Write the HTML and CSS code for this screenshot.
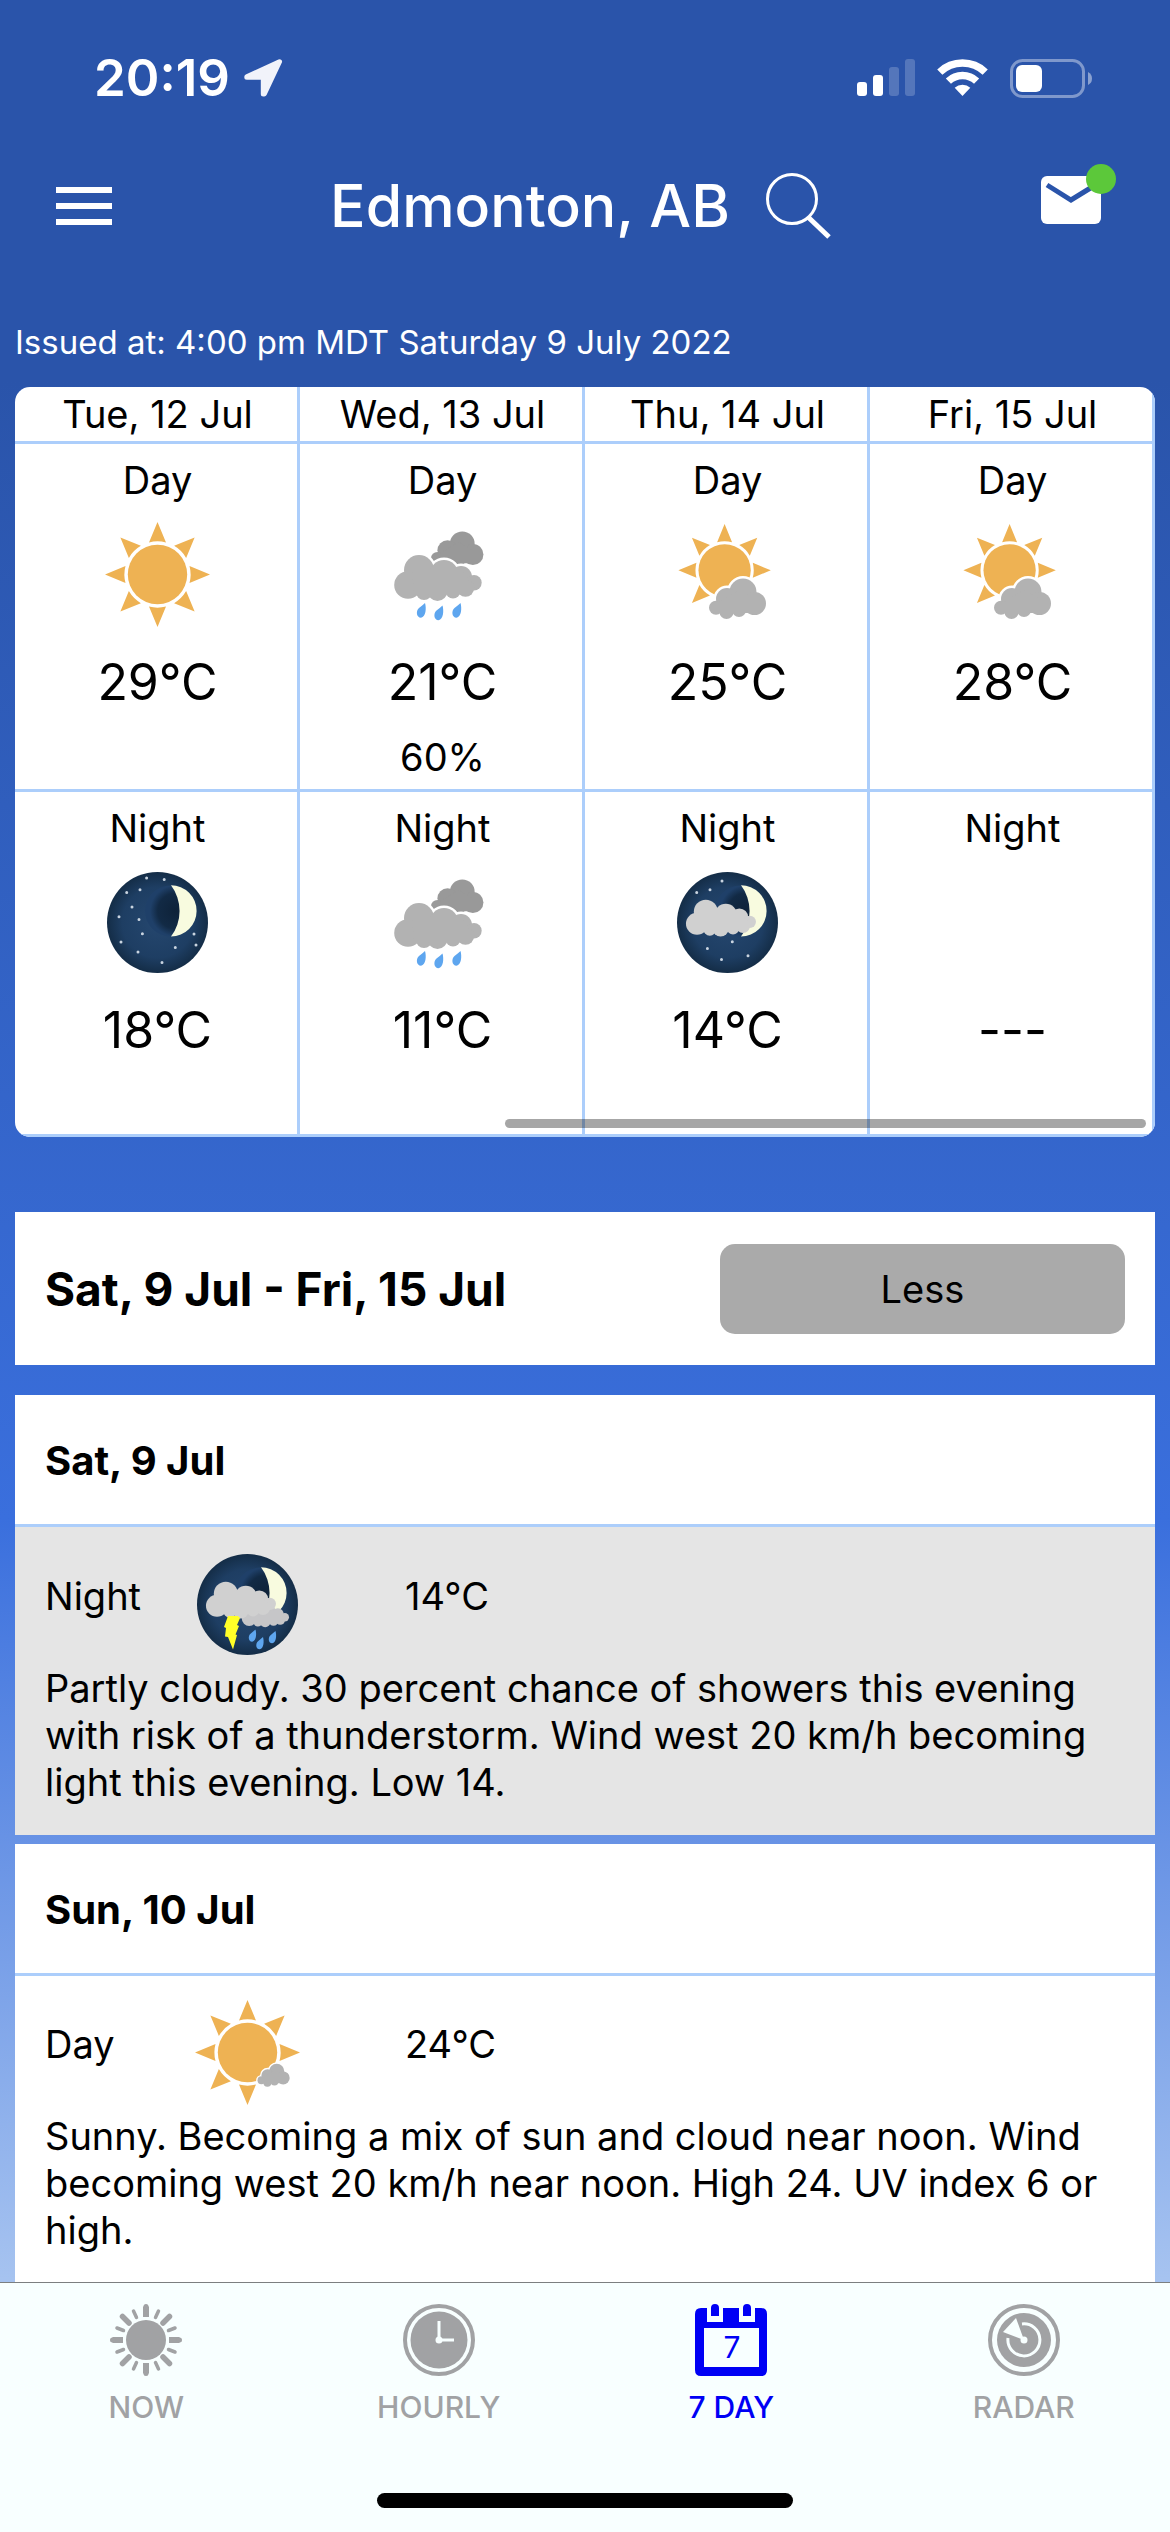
FILE: index.html
```html
<!DOCTYPE html>
<html lang="en">
<head>
    <meta charset="UTF-8">
    <meta name="viewport" content="width=device-width, initial-scale=1.0">
    <title>Edmonton, AB - 7 Day Forecast</title>
    <link rel="stylesheet" href="styles.css">
</head>
<body>
    <!-- Shared weather icon shapes -->
    <svg class="defs" width="0" height="0" aria-hidden="true">
        <defs>
            <radialGradient id="sky">
                <stop offset="0" stop-color="#25476f"/>
                <stop offset="0.7" stop-color="#1e3e63"/>
                <stop offset="1" stop-color="#142d47"/>
            </radialGradient>
            <radialGradient id="shade" cx="0.6">
                <stop offset="0" stop-color="#0e2239"/>
                <stop offset="0.7" stop-color="#122a45"/>
                <stop offset="1" stop-color="#1f4069"/>
            </radialGradient>
            <path id="ray" d="M52.5 0L61 20.5A33 33 0 0 0 44 20.5Z"/>
            <g id="sun-part">
                <circle cx="52.5" cy="52.5" r="29.7"/>
                <use href="#ray"/>
                <use href="#ray" transform="rotate(45 52.5 52.5)"/>
                <use href="#ray" transform="rotate(90 52.5 52.5)"/>
                <use href="#ray" transform="rotate(225 52.5 52.5)"/>
                <use href="#ray" transform="rotate(270 52.5 52.5)"/>
                <use href="#ray" transform="rotate(315 52.5 52.5)"/>
            </g>
            <g id="cloud">
                <circle cx="29" cy="48" r="15"/>
                <circle cx="18" cy="63" r="13.8"/>
                <circle cx="54" cy="52" r="14"/>
                <circle cx="71" cy="55" r="11"/>
                <circle cx="84" cy="60.7" r="7.7"/>
                <circle cx="34" cy="70" r="8"/>
                <circle cx="47.5" cy="69" r="10"/>
                <circle cx="63" cy="69" r="7.5"/>
                <circle cx="75.5" cy="66" r="8.7"/>
                <path d="M22 48H72L82 64L70 70H24Z"/>
            </g>
            <g id="cloud-small">
                <circle cx="34" cy="14" r="13.5"/>
                <circle cx="45.5" cy="25.5" r="11.5"/>
                <circle cx="18" cy="21" r="11"/>
                <circle cx="7" cy="29.7" r="7"/>
                <circle cx="17.5" cy="34" r="7"/>
                <circle cx="30" cy="32" r="7"/>
                <path d="M10 24L30 12L44 20V35H10Z"/>
            </g>
            <path id="drop" d="M0 0C1.5 5 1 14-4 14.7C-8.5 14.7-9.5 8-6 5Q-2 2 0 0Z"/>
            <g id="night">
                <circle cx="52.5" cy="52.5" r="50.5" fill="url(#sky)"/>
                <circle cx="65.5" cy="41" r="25.5" fill="url(#shade)"/>
                <path d="M66 15.3A25.6 25.6 0 0 1 66 66.5A42.5 42.5 0 0 0 66 15.3Z" fill="#f8fbdf"/>
            </g>
            <symbol id="icon-sunny" viewBox="0 0 105 105">
                <g class="sun">
                    <use href="#sun-part"/>
                    <use href="#ray" transform="rotate(135 52.5 52.5)"/>
                    <use href="#ray" transform="rotate(180 52.5 52.5)"/>
                </g>
            </symbol>
            <symbol id="icon-mostly-sunny" viewBox="0 0 105 105">
                <g class="sun">
                    <use href="#sun-part"/>
                    <use href="#ray" transform="rotate(180 52.5 52.5)"/>
                </g>
                <g transform="translate(62.5 63.5) scale(0.565)">
                    <use href="#cloud-small" class="halo"/>
                    <use href="#cloud-small" class="cloud"/>
                </g>
            </symbol>
            <symbol id="icon-partly-cloudy" viewBox="0 0 105 105">
                <use href="#sun-part" class="sun" transform="translate(3.4 2.1) scale(0.88)"/>
                <g transform="translate(34 56)">
                    <use href="#cloud-small" class="halo"/>
                    <use href="#cloud-small" class="cloud"/>
                </g>
            </symbol>
            <symbol id="icon-rain" viewBox="0 0 105 105">
                <use href="#cloud-small" class="cloud-dark" transform="translate(41 9) scale(0.92)"/>
                <use href="#cloud" class="halo"/>
                <use href="#cloud" class="cloud"/>
                <g class="rain">
                    <use href="#drop" x="35" y="81"/>
                    <use href="#drop" x="52.5" y="83.5"/>
                    <use href="#drop" x="70.5" y="81"/>
                </g>
            </symbol>
            <symbol id="icon-clear-night" viewBox="0 0 105 105">
                <use href="#night"/>
                <path class="stars" d="M41.6 8h0M59.2 9.4h0M21.7 22.4h0M35 19.7h0M27 37h0M14 46.7h0M34 49.4h0M37.4 63.7h0M16 72h0M33 82h0M70.3 77.4h0M89 64h0M91 75h0M57 92.4h0"/>
            </symbol>
            <symbol id="icon-cloudy-night" viewBox="0 0 105 105">
                <use href="#night"/>
                <path class="stars" d="M47 11h0M21.7 22.4h0M35 19.7h0M57.3 71.7h0M32.4 78.4h0M46.5 89.4h0M73 85.7h0"/>
                <use href="#cloud" class="cloud-night" transform="translate(7.6 3.3) scale(0.8)"/>
            </symbol>
            <symbol id="icon-storm-night" viewBox="0 0 105 105">
                <use href="#night"/>
                <use href="#cloud" class="cloud-back" transform="translate(44.5 32.5) scale(0.54)"/>
                <use href="#cloud" class="cloud-night" transform="translate(7.6 3.3) scale(0.8)"/>
                <path fill="#ffff28" d="M33 64L29 75L31 76L30 84.5L33 85L38 97.5L42 83L40.5 82.5L44 74L42 73L45 66L43 64Z"/>
                <g class="rain">
                    <use href="#drop" transform="translate(60.5 77.5) scale(0.83)"/>
                    <use href="#drop" transform="translate(68 85) scale(0.83)"/>
                    <use href="#drop" transform="translate(80.5 79) scale(0.83)"/>
                </g>
            </symbol>
        </defs>
    </svg>

    <div class="status-bar">
        <div class="clock">
            <span>20:19</span>
            <svg width="39" height="38" viewBox="0 0 39 38">
                <path d="M35.5 2.8L2.8 17.8V18.3H19.3V35H20.3Z" fill="#f1f3fa" stroke="#f1f3fa" stroke-width="5" stroke-linejoin="round"/>
            </svg>
        </div>
        <div class="indicators">
            <svg width="58" height="38" viewBox="0 0 58 38" fill="#fff">
                <rect x="0" y="23" width="10" height="14" rx="3"/>
                <rect x="16" y="16" width="10" height="21" rx="3"/>
                <rect x="32" y="8" width="10" height="29" rx="3" opacity="0.2"/>
                <rect x="48" y="0" width="10" height="37" rx="3" opacity="0.2"/>
            </svg>
            <svg width="51" height="38" viewBox="0 0 51 38" fill="none" stroke="#fff">
                <path d="M2.8 13.1A33 33 0 0 1 48.2 13.1" stroke-width="7.5"/>
                <path d="M11.4 22.1A20.5 20.5 0 0 1 39.6 22.1" stroke-width="7.5"/>
                <path d="M25.5 37L17.7 28.8A11.5 11.5 0 0 1 33.3 28.8Z" fill="#fff" stroke="none"/>
            </svg>
            <svg width="82" height="39" viewBox="0 0 82 39">
                <rect x="1.5" y="1.5" width="72" height="36" rx="11" fill="none" stroke="#fff" stroke-width="3" opacity="0.4"/>
                <rect x="6" y="6" width="26" height="27" rx="6" fill="#fff"/>
                <path d="M78 13Q82 15 82 19.5Q82 24 78 26Z" fill="#fff" opacity="0.45"/>
            </svg>
        </div>
    </div>

    <header class="top-bar">
        <button class="icon-button menu" aria-label="Menu">
            <svg width="56" height="38" viewBox="0 0 56 38" fill="#fff">
                <path d="M0 0h56v6H0zM0 16h56v6H0zM0 32h56v6H0z"/>
            </svg>
        </button>
        <div class="location">
            <h1>Edmonton, AB</h1>
            <button class="icon-button" aria-label="Search location">
                <svg width="66" height="66" viewBox="0 0 66 66" fill="none" stroke="#fff">
                    <circle cx="26" cy="26" r="24.5" stroke-width="3"/>
                    <path d="M42 44L63 64" stroke-width="5"/>
                </svg>
            </button>
        </div>
        <button class="icon-button mail" aria-label="Messages">
            <svg width="75" height="84" viewBox="0 0 75 84">
                <rect x="0" y="12" width="60" height="48" rx="6" fill="#fff"/>
                <path d="M6 21L30 36L56 20" fill="none" stroke="#2a54aa" stroke-width="5"/>
                <circle cx="60" cy="15" r="15" fill="#5cc83a"/>
            </svg>
        </button>
    </header>

    <main class="content">
        <p class="issued">Issued at: 4:00 pm MDT Saturday 9 July 2022</p>

        <div class="forecast">
            <table>
                <thead>
                    <tr>
                        <th scope="col">Tue, 12 Jul</th>
                        <th scope="col">Wed, 13 Jul</th>
                        <th scope="col">Thu, 14 Jul</th>
                        <th scope="col">Fri, 15 Jul</th>
                    </tr>
                </thead>
                <tbody>
                    <tr>
                        <td>
                            <div class="period">Day</div>
                            <svg class="weather"><use href="#icon-sunny"/></svg>
                            <div class="temp">29°C</div>
                            <div class="pop"></div>
                        </td>
                        <td>
                            <div class="period">Day</div>
                            <svg class="weather"><use href="#icon-rain"/></svg>
                            <div class="temp">21°C</div>
                            <div class="pop">60%</div>
                        </td>
                        <td>
                            <div class="period">Day</div>
                            <svg class="weather"><use href="#icon-partly-cloudy"/></svg>
                            <div class="temp">25°C</div>
                            <div class="pop"></div>
                        </td>
                        <td>
                            <div class="period">Day</div>
                            <svg class="weather"><use href="#icon-partly-cloudy"/></svg>
                            <div class="temp">28°C</div>
                            <div class="pop"></div>
                        </td>
                    </tr>
                    <tr>
                        <td>
                            <div class="period">Night</div>
                            <svg class="weather"><use href="#icon-clear-night"/></svg>
                            <div class="temp">18°C</div>
                            <div class="pop"></div>
                        </td>
                        <td>
                            <div class="period">Night</div>
                            <svg class="weather"><use href="#icon-rain"/></svg>
                            <div class="temp">11°C</div>
                            <div class="pop"></div>
                        </td>
                        <td>
                            <div class="period">Night</div>
                            <svg class="weather"><use href="#icon-cloudy-night"/></svg>
                            <div class="temp">14°C</div>
                            <div class="pop"></div>
                        </td>
                        <td>
                            <div class="period">Night</div>
                            <svg class="weather"></svg>
                            <div class="temp">---</div>
                            <div class="pop"></div>
                        </td>
                    </tr>
                </tbody>
            </table>
            <div class="scroll-thumb"></div>
        </div>

        <div class="range">
            <h2>Sat, 9 Jul - Fri, 15 Jul</h2>
            <button class="less">Less</button>
        </div>

        <section class="day">
            <h3>Sat, 9 Jul</h3>
            <div class="details night">
                <div class="summary">
                    <span>Night</span>
                    <svg class="weather"><use href="#icon-storm-night"/></svg>
                    <span class="summary-temp">14°C</span>
                </div>
                <p>Partly cloudy. 30 percent chance of showers this evening with risk of a thunderstorm. Wind west 20 km/h becoming light this evening. Low 14.</p>
            </div>
        </section>

        <section class="day last">
            <h3>Sun, 10 Jul</h3>
            <div class="details">
                <div class="summary">
                    <span>Day</span>
                    <svg class="weather"><use href="#icon-mostly-sunny"/></svg>
                    <span class="summary-temp">24°C</span>
                </div>
                <p>Sunny. Becoming a mix of sun and cloud near noon. Wind becoming west 20 km/h near noon. High 24. UV index 6 or high.</p>
            </div>
        </section>
    </main>

    <footer class="tab-bar">
        <nav>
            <a href="#now">
                <svg width="72" height="72" viewBox="-36 -36 72 72" fill="currentColor" stroke="currentColor">
                    <circle r="20" stroke="none"/>
                    <path d="M0-23V-33.5M0 23V33.5M-23 0H-33.5M23 0H33.5" stroke-width="6"/>
                    <path d="M0-33V-33.5M0 33V33.5M-33 0H-33.5M33 0H33.5" stroke-width="5" stroke-linecap="round"/>
                    <path d="M17-17L23.5-23.5M-17-17L-23.5-23.5M17 17L23.5 23.5M-17 17L-23.5 23.5" stroke-width="5.5" stroke-linecap="round"/>
                    <path d="M9.5-22.5L12.5-29M-9.5-22.5L-12.5-29M9.5 22.5L12.5 29M-9.5 22.5L-12.5 29M22.5-9.5L29-12M-22.5-9.5L-29-12M22.5 9.5L29 12M-22.5 9.5L-29 12" stroke-width="3.5" stroke-linecap="round"/>
                </svg>
                NOW
            </a>
            <a href="#hourly">
                <svg width="72" height="72" viewBox="-36 -36 72 72" fill="none">
                    <circle r="34" stroke="currentColor" stroke-width="4"/>
                    <circle r="28.5" fill="currentColor"/>
                    <path d="M0-19V0H15" stroke="#f8ffff" stroke-width="3"/>
                    <circle r="3.5" fill="#f8ffff"/>
                </svg>
                HOURLY
            </a>
            <a href="#week" class="active">
                <svg width="72" height="72" viewBox="0 0 72 72" fill="currentColor">
                    <path d="M6 4H12V18H28V4H44V18H60V4H66Q72 4 72 10V66Q72 72 66 72H6Q0 72 0 66V10Q0 4 6 4ZM9 24V63H64V24Z" fill-rule="evenodd"/>
                    <path d="M16 12V4Q16 0 20 0T24 4V12ZM48 12V4Q48 0 52 0T56 4V12Z"/>
                    <text x="37" y="54" text-anchor="middle" class="calendar-day">7</text>
                </svg>
                7 DAY
            </a>
            <a href="#radar">
                <svg width="72" height="72" viewBox="-36 -36 72 72" fill="none">
                    <circle r="34" stroke="currentColor" stroke-width="4"/>
                    <circle r="27" fill="currentColor"/>
                    <path d="M-2-16A16 16 0 1 1-16-2" stroke="#f8ffff" stroke-width="3"/>
                    <path d="M0 0L-21-8L-8-22Z" fill="#f8ffff"/>
                    <circle r="3.5" fill="#f8ffff"/>
                </svg>
                RADAR
            </a>
        </nav>
        <div class="home-indicator"></div>
    </footer>
</body>
</html>
```

FILE: styles.css
```css
* {
    box-sizing: border-box;
}

body {
    margin: 0;
    min-height: 100vh;
    display: flex;
    flex-direction: column;
    font-family: Inter, "Liberation Sans", Arial, sans-serif;
    font-size: 38px;
    line-height: 46px;
    color: #000;
    background: linear-gradient(#2a54aa 15%, #3a6fdd 60%, #a6c3f0 90%);
}

h1, h2, h3, p {
    margin: 0;
}

button {
    font: inherit;
    color: inherit;
    border: none;
    cursor: pointer;
}

svg {
    display: block;
}

.defs {
    position: absolute;
}

.status-bar {
    display: flex;
    justify-content: space-between;
    align-items: center;
    padding: 54px 78px 30px 94px;
    color: #fff;
}

.clock {
    display: flex;
    align-items: center;
    gap: 14px;
    font-size: 51px;
    font-weight: 600;
    line-height: 48px;
}

.indicators {
    display: flex;
    align-items: center;
    gap: 22px;
}

.top-bar {
    display: grid;
    grid-template-columns: 1fr auto 1fr;
    align-items: center;
    height: 148px;
    padding: 0 54px 0 56px;
    color: #fff;
}

.icon-button {
    padding: 0;
    background: none;
}

.menu {
    justify-self: start;
}

.mail {
    justify-self: end;
}

.location {
    display: flex;
    align-items: center;
    gap: 36px;
    padding-right: 10px;
}

.location h1 {
    font-size: 59px;
    font-weight: 500;
    line-height: 72px;
}

.content {
    flex: 1;
    display: flex;
    flex-direction: column;
    padding: 0 15px;
}

.issued {
    padding: 40px 0 23px;
    font-size: 33px;
    line-height: 44px;
    color: #fff;
}

/* Four day table */
.forecast {
    position: relative;
    overflow: hidden;
    border-radius: 15px;
    background-color: #fff;
}

.forecast table {
    width: 100%;
    table-layout: fixed;
    border-collapse: separate;
    border-spacing: 0;
    text-align: center;
}

.forecast th,
.forecast td {
    border-right: 3px solid #accefb;
    border-bottom: 3px solid #accefb;
}

.forecast th {
    padding: 4px 0 4px 3px;
    font-weight: 400;
}

.forecast td {
    padding: 13px 0 9px 3px;
}

.forecast tr:last-child td {
    padding-bottom: 6px;
}

.weather {
    width: 105px;
    height: 105px;
}

.forecast .weather {
    margin: 19px auto 25px;
}

.temp {
    font-size: 50px;
    line-height: 60px;
}

.pop {
    min-height: 46px;
    margin-top: 22px;
}

.scroll-thumb {
    position: absolute;
    left: 43%;
    right: 9px;
    bottom: 9px;
    height: 9px;
    border-radius: 5px;
    background-color: rgba(0, 0, 0, 0.35);
}

.range {
    display: flex;
    justify-content: space-between;
    align-items: center;
    margin: 75px 0 30px;
    padding: 32px 30px 31px;
    background-color: #fff;
}

.range h2 {
    font-size: 46px;
    font-weight: 700;
}

.less {
    flex: 0 0 37.5%;
    height: 90px;
    border-radius: 15px;
    background-color: #aaa;
}

/* Day cards */
.day {
    margin-bottom: 9px;
    background-color: #fff;
}

.day.last {
    flex: 1;
    margin-bottom: 0;
}

.day h3 {
    padding: 43px 30px 40px;
    font-size: 40px;
    font-weight: 700;
    border-bottom: 3px solid #accefb;
}

.details {
    padding: 25px 30px 29px;
}

.last .details {
    padding: 24px 30px 20px;
}

.details.night {
    background-color: #e5e5e5;
}

.details p {
    margin-top: 8px;
    line-height: 47px;
}

.summary {
    display: grid;
    grid-template-columns: 150px 105px 1fr;
}

.summary span {
    padding-top: 21px;
}

.summary .summary-temp {
    padding-left: 105px;
}

/* Weather icon colours */
.sun {
    fill: #eeb253;
}

.cloud {
    fill: #b2b2b2;
}

.cloud-dark {
    fill: #999;
}

.cloud-night {
    fill: #d0d0d0;
}

.cloud-back {
    fill: #c6c6c8;
}

.halo {
    fill: #fff;
    stroke: #fff;
    stroke-width: 5;
}

.rain {
    fill: #5ea6ef;
}

.stars {
    stroke: #c9d4e0;
    stroke-width: 3;
    stroke-linecap: round;
}

.tab-bar {
    border-top: 1px solid #7c7f80;
    padding: 21px 0 24px;
    background-color: #f8ffff;
}

.tab-bar nav {
    display: grid;
    grid-template-columns: repeat(4, 1fr);
}

.tab-bar a {
    display: flex;
    flex-direction: column;
    align-items: center;
    gap: 14px;
    font-size: 30px;
    font-weight: 500;
    line-height: 34px;
    color: #a1a2a4;
    text-decoration: none;
}

.tab-bar a.active {
    color: #0000f5;
}

.calendar-day {
    font-size: 30px;
    font-weight: 400;
}

.home-indicator {
    width: 416px;
    height: 15px;
    margin: 69px auto 0;
    border-radius: 8px;
    background-color: #000;
}
```
